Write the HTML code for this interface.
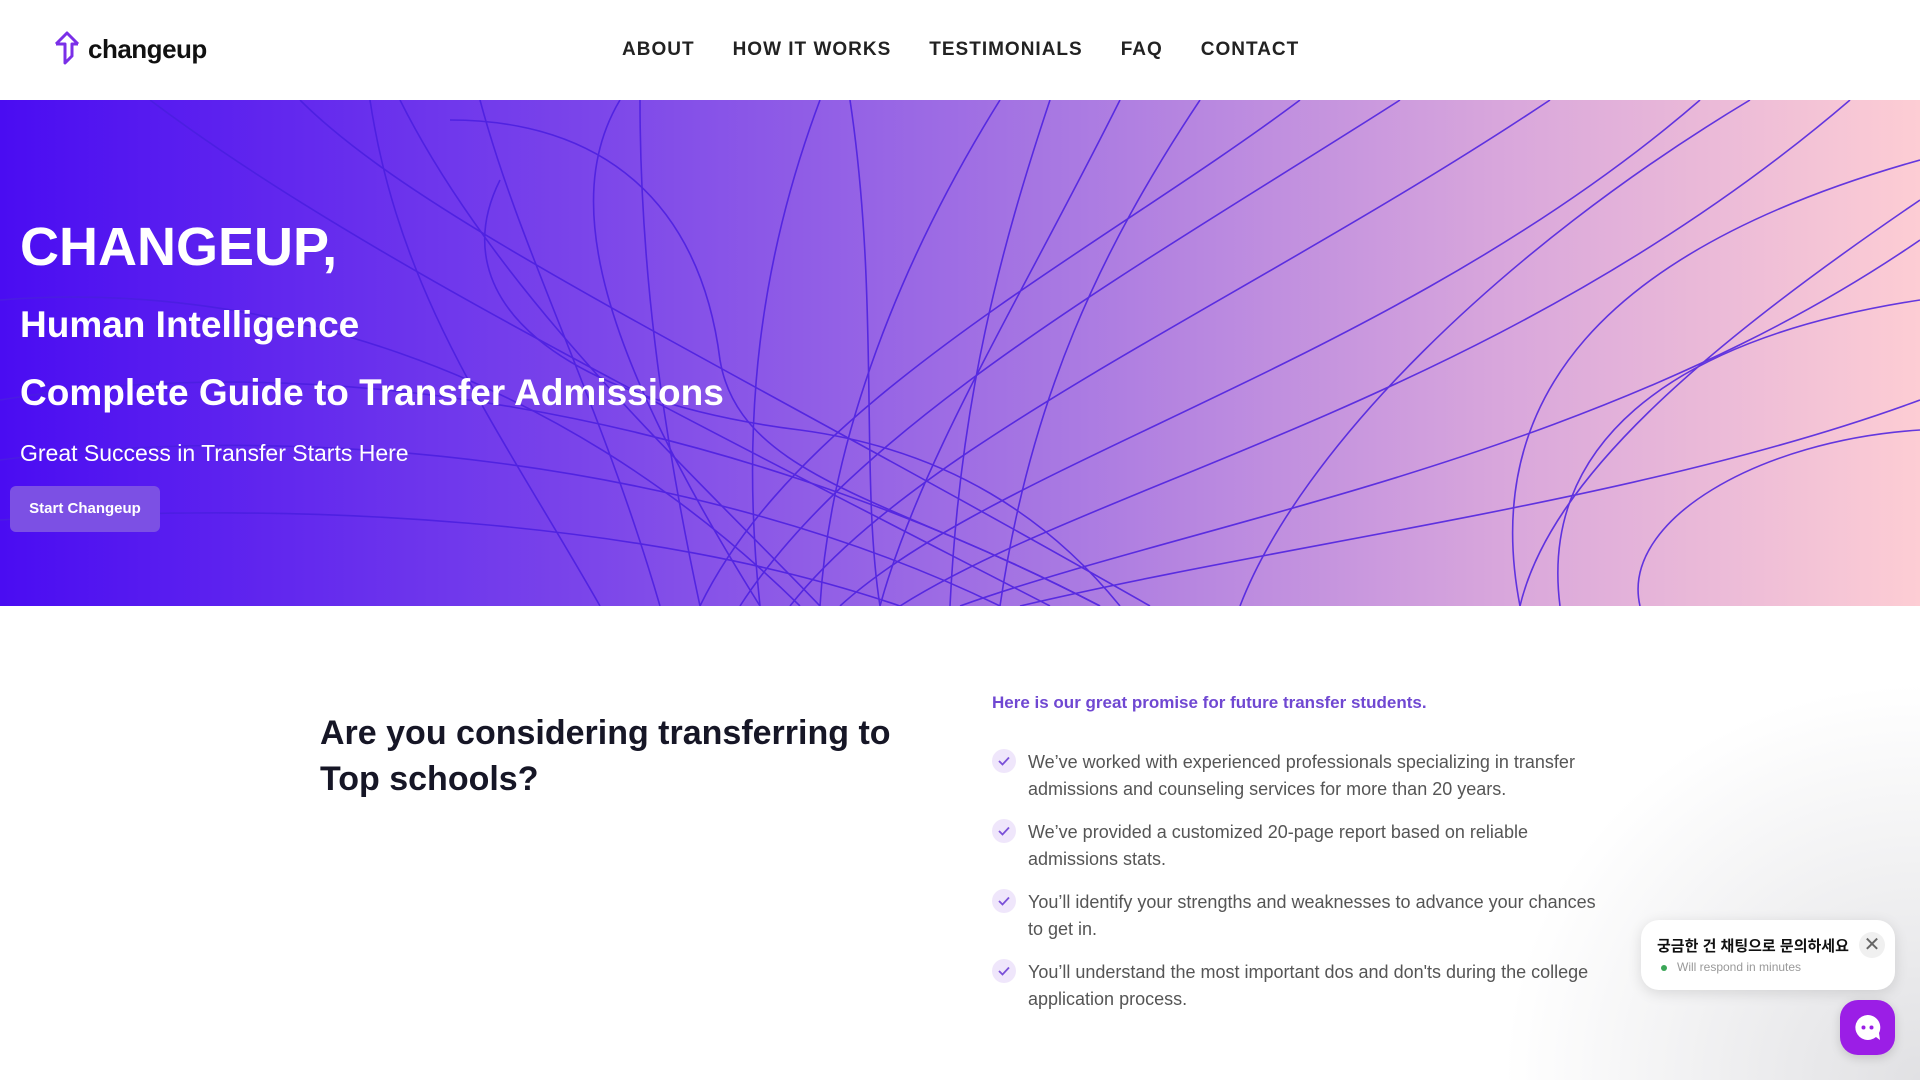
<!DOCTYPE html>
<html><head><meta charset="utf-8"><style>
*{margin:0;padding:0;box-sizing:border-box}
body{width:1920px;height:1080px;overflow:hidden;background:#fff;font-family:"Liberation Sans","Noto Sans CJK KR",sans-serif;position:relative}
header{height:100px;position:relative;background:#fff}
.logo{position:absolute;left:54px;top:30px;display:flex;align-items:center}
.logo span{font-size:26px;font-weight:bold;color:#111;margin-left:4px;letter-spacing:-0.5px}
nav{position:absolute;left:622px;top:39px;display:flex;gap:38px}
nav a{font-size:19px;font-weight:bold;color:#222;letter-spacing:1px;text-decoration:none}
.hero{position:absolute;top:100px;left:0;width:1920px;height:506px;background:linear-gradient(90deg,#4a0cf2 0%,#7a44ea 30%,#a878e2 55%,#d8a6dc 78%,#fdcdd4 100%);overflow:hidden}
.hero svg{position:absolute;left:0;top:0}
.h1{position:absolute;left:20px;top:116px;font-size:54px;font-weight:bold;color:#fff}
.h2{position:absolute;left:20px;font-size:37px;font-weight:bold;color:#fff}
.h3{position:absolute;left:20px;top:340px;font-size:23px;color:#fff}
.btn{position:absolute;left:10px;top:386px;width:150px;height:46px;background:#7c50e4;border-radius:6px;color:#fff;font-size:15px;font-weight:bold;text-align:center;line-height:46px}
.q{position:absolute;left:320px;top:710px;font-size:34px;font-weight:bold;color:#161626;line-height:46px}
.pr{position:absolute;left:992px;top:693px;font-size:17px;font-weight:bold;color:#7048d2}
.li{position:absolute;left:992px;width:620px;font-size:18px;color:#555;line-height:27px;padding-left:36px}
.li i{position:absolute;left:0;top:0;width:24px;height:24px;border-radius:50%;background:#efe6fb}
.li i svg{position:absolute;left:6px;top:7px}
.shade{position:absolute;right:0;bottom:0;width:420px;height:400px;background:radial-gradient(ellipse at 100% 100%,rgba(200,200,205,.55),rgba(255,255,255,0) 70%)}
.bub{position:absolute;left:1641px;top:920px;width:254px;height:70px;background:#fff;border-radius:18px;box-shadow:0 3px 14px rgba(0,0,0,.12)}
.bub b{position:absolute;left:16px;top:15px;font-size:15px;color:#111}
.bub small{position:absolute;left:36px;top:40px;font-size:12px;color:#999}
.bub .dot{position:absolute;left:20px;top:45px;width:6px;height:6px;border-radius:50%;background:#3aa657}
.bub .x{position:absolute;right:10px;top:12px;width:26px;height:26px;border-radius:50%;background:#f0f0f0;color:#666;font-size:20px;text-align:center;line-height:26px}
.cb{position:absolute;left:1840px;top:1000px;width:55px;height:55px;border-radius:18px;background:#9b1ee6;box-shadow:0 3px 10px rgba(0,0,0,.15)}
</style></head><body>
<header>
<div class="logo"><svg width="30" height="38" viewBox="0 0 30 38"><path d="M2 14 L13 3 L24 14 M24 14 L18 14 L18 26 L11 33 L11 14 L2 14" fill="none" stroke="#7a2fe8" stroke-width="3" stroke-linejoin="round"/></svg><span>changeup</span></div>
<nav><a>ABOUT</a><a>HOW IT WORKS</a><a>TESTIMONIALS</a><a>FAQ</a><a>CONTACT</a></nav>
</header>
<div class="hero">
<svg width="1920" height="506" viewBox="0 0 1920 506" fill="none" stroke="#4a1ee0" stroke-width="1.6" opacity=".85">
<path d="M700 506 C800 300 1100 150 1300 0"/><path d="M740 506 C860 320 1150 160 1400 0"/><path d="M790 506 C920 340 1250 200 1550 0"/><path d="M840 506 C1000 360 1400 260 1700 0"/><path d="M900 506 C1100 380 1500 300 1850 0"/><path d="M960 506 C1200 420 1600 360 1920 140"/><path d="M1020 506 C1300 440 1650 400 1920 300"/><path d="M1520 506 C1480 300 1600 150 1920 60"/><path d="M1560 506 C1540 350 1660 240 1920 200"/><path d="M1640 506 C1620 420 1760 340 1920 330"/>
<path d="M660 506 C600 300 520 150 480 0"/><path d="M700 506 C660 320 640 160 640 0"/><path d="M760 506 C740 320 760 160 820 0"/><path d="M820 506 C830 340 900 160 1000 0"/><path d="M880 506 C920 360 1020 200 1120 0"/><path d="M600 506 C500 330 400 200 370 0"/>
<path d="M0 300 C300 250 700 300 1100 506"/><path d="M0 360 C300 320 700 360 1000 506"/><path d="M0 420 C300 400 650 420 900 506"/><path d="M300 0 C420 120 700 250 1150 506"/><path d="M150 0 C350 150 650 300 1050 506"/><path d="M450 20 C600 20 700 100 720 260 C740 380 900 400 1100 506"/><path d="M500 80 C440 200 560 300 800 330 C950 350 1050 420 1120 506"/><path d="M0 200 C250 180 550 260 800 506"/>
<path d="M1050 0 C1000 150 960 300 950 506"/><path d="M1200 0 C1100 150 1030 300 1000 506"/><path d="M620 0 C560 100 600 250 760 506"/><path d="M1750 0 C1500 150 1300 350 1240 506"/><path d="M1920 100 C1700 250 1550 380 1520 506"/><path d="M400 0 C500 200 700 380 820 506"/><path d="M850 0 C880 200 860 380 880 506"/>
</svg>
<div class="h1">CHANGEUP,</div>
<div class="h2" style="top:204px">Human Intelligence</div>
<div class="h2" style="top:272px">Complete Guide to Transfer Admissions</div>
<div class="h3">Great Success in Transfer Starts Here</div>
<div class="btn">Start Changeup</div>
</div>
<div class="shade"></div>
<div class="q">Are you considering transferring to<br>Top schools?</div>
<div class="pr">Here is our great promise for future transfer students.</div>
<div class="li" style="top:749px"><i><svg width="12" height="10" viewBox="0 0 12 10"><path d="M1 5 L4.5 8.5 L11 1.5" fill="none" stroke="#7a50d8" stroke-width="1.8"/></svg></i>We’ve worked with experienced professionals specializing in transfer admissions and counseling services for more than 20 years.</div>
<div class="li" style="top:819px"><i><svg width="12" height="10" viewBox="0 0 12 10"><path d="M1 5 L4.5 8.5 L11 1.5" fill="none" stroke="#7a50d8" stroke-width="1.8"/></svg></i>We’ve provided a customized 20-page report based on reliable admissions stats.</div>
<div class="li" style="top:889px"><i><svg width="12" height="10" viewBox="0 0 12 10"><path d="M1 5 L4.5 8.5 L11 1.5" fill="none" stroke="#7a50d8" stroke-width="1.8"/></svg></i>You’ll identify your strengths and weaknesses to advance your chances to get in.</div>
<div class="li" style="top:959px"><i><svg width="12" height="10" viewBox="0 0 12 10"><path d="M1 5 L4.5 8.5 L11 1.5" fill="none" stroke="#7a50d8" stroke-width="1.8"/></svg></i>You’ll understand the most important dos and don'ts during the college application process.</div>
<div class="bub"><b>궁금한 건 채팅으로 문의하세요</b><span class="dot"></span><small>Will respond in minutes</small><span class="x">✕</span></div>
<div class="cb"><svg width="55" height="55" viewBox="0 0 55 55"><path d="M27.5 15 A12.5 12.5 0 1 0 36 37 L40 40 L39 33 A12.5 12.5 0 0 0 27.5 15Z" fill="#fff"/><circle cx="23.5" cy="27.5" r="2" fill="#9b1ee6"/><circle cx="31.5" cy="27.5" r="2" fill="#9b1ee6"/></svg></div>
</body></html>
